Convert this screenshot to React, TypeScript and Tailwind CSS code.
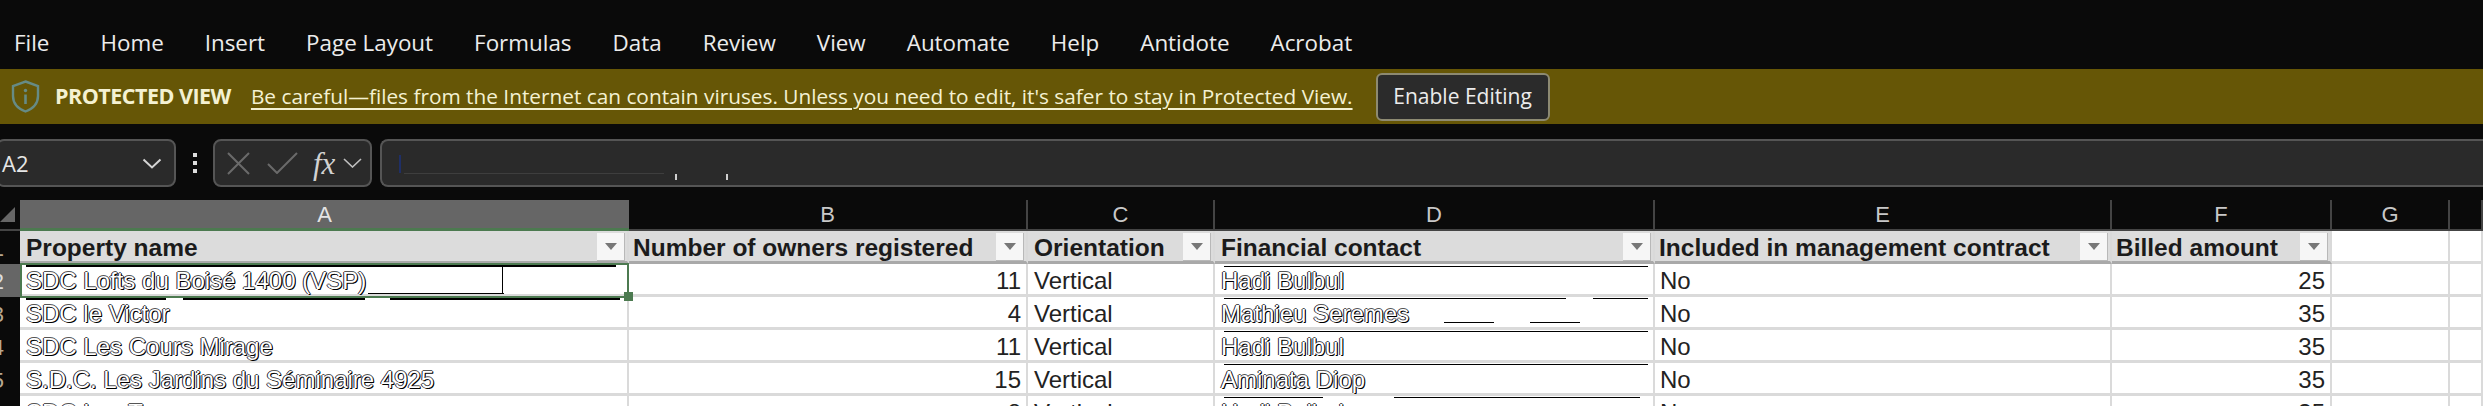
import React from "react";

const tabs = ["File", "Home", "Insert", "Page Layout", "Formulas", "Data", "Review", "View", "Automate", "Help", "Antidote", "Acrobat"];

const ui = "font-['Open_Sans','Noto_Sans',sans-serif]";
const ghost = "text-white [text-shadow:1px_1px_0_#000,-1px_0_0_#24243c,0_-1px_0_#555,1px_0_0_#333]";

function Filter() {
  return (
    <span className="absolute right-[2px] top-[2px] flex h-[28px] w-[28px] items-center justify-center border-r border-b border-[#b8b8b8] bg-[#f6f6f6]">
      <svg width="12" height="8" viewBox="0 0 12 8"><path d="M0 0h12L6 7z" fill="#777" /></svg>
    </span>
  );
}

function Line({ x, y, w, h = 1 }: { x: number; y: number; w: number; h?: number }) {
  return <span className="absolute bg-black" style={{ left: x, top: y, width: w, height: h }} />;
}

function ColHead({ l, active }: { l: string; active?: boolean }) {
  return (
    <div className={active
      ? "flex h-[31px] items-center justify-center border-b-[3px] border-[#4c7a50] bg-[#666666] text-[22px] text-[#e4e4e4]"
      : "flex h-[31px] items-center justify-center border-r-2 border-b-2 border-[#444444] text-[22px] text-[#c8c8c8]"}>
      {l}
    </div>
  );
}

function Head({ t, f = true, pl = "pl-[6px]" }: { t: string; f?: boolean; pl?: string }) {
  return (
    <div className={`relative flex h-[33px] items-center overflow-hidden whitespace-nowrap border-r-2 border-b-[3px] border-r-[#d9d9d9] border-b-[#a9a9a9] bg-[#dcdcdc] pt-[4px] text-[24.5px] font-bold text-[#1b1b1b] ${pl}`}>
      {t}
      {f && <Filter />}
    </div>
  );
}

function Blank({ h = "h-[33px]" }: { h?: string }) {
  return <div className={`${h} border-r-2 border-b-[3px] border-[#dadada] bg-white`} />;
}

function Cell({ t, right, ghostText, pl = "pl-[6px]" }: { t: string; right?: boolean; ghostText?: boolean; pl?: string }) {
  return (
    <div className={`relative flex h-[33px] items-center overflow-visible whitespace-nowrap border-r-2 border-b-[3px] border-[#dadada] bg-white pt-[3px] text-[24px] ${right ? "justify-end pr-[5px]" : pl} ${ghostText ? ghost : "text-[#222222]"}`}>
      {t}
    </div>
  );
}

function RowNum({ n, active }: { n: number; active?: boolean }) {
  return (
    <div className={`flex h-[33px] items-center justify-end overflow-hidden pr-[16px] pt-[2px] text-[22px] ${active ? "bg-[#666666] text-[#dddddd]" : "bg-[#0a0a0a] text-[#b8a890]"}`}>
      {n}
    </div>
  );
}

const rows = [
  ["SDC Lofts du Boisé 1400 (VSP)", "11", "Hadi Bulbul", "25"],
  ["SDC le Victor", "4", "Mathieu Seremes", "35"],
  ["SDC Les Cours Mirage", "11", "Hadi Bulbul", "35"],
  ["S.D.C. Les Jardins du Séminaire 4925", "15", "Aminata Diop", "35"],
  ["SDC Les Tours", "8", "Hadi Bulbul", "35"],
];

export default function App() {
  return (
    <div className="relative h-[406px] w-[2483px] overflow-hidden bg-[#0a0a0a]">
      <nav className={`flex h-[69px] items-center pl-[14px] pt-[16px] text-[22.4px] text-[#ececec] ${ui}`}>
        {tabs.map((t, i) => (
          <span key={t} className={i === 0 ? "mr-[51px]" : "mr-[41px]"}>{t}</span>
        ))}
      </nav>

      <div className={`flex h-[55px] items-center bg-[#665606] text-[#f4f1d2] ${ui}`}>
        <svg className="ml-[11px]" width="29" height="33" viewBox="0 0 29 33" fill="none">
          <path d="M14.5 1.5 L27 6 V16 C27 24 21 29 14.5 31.5 C8 29 2 24 2 16 V6 Z" stroke="#668b85" strokeWidth="2.4" />
          <circle cx="14.5" cy="10.5" r="1.7" fill="#668b85" />
          <path d="M14.5 14.5 V24" stroke="#668b85" strokeWidth="2.6" />
        </svg>
        <span className="ml-[15px] whitespace-nowrap text-[21.5px] font-bold tracking-[-0.5px]">PROTECTED VIEW</span>
        <span className="ml-[20px] whitespace-nowrap text-[20.8px] underline decoration-2 underline-offset-[4px]">Be careful—files from the Internet can contain viruses. Unless you need to edit, it's safer to stay in Protected View.</span>
        <button className="ml-[23px] flex h-[48px] w-[174px] items-center justify-center rounded-[6px] border-2 border-[#8d8a72] bg-[#2b2b2b] text-[21px] text-[#ececec]">Enable Editing</button>
      </div>

      <div className="mt-[15px] flex h-[48px] items-stretch">
        <div className={`-ml-[4px] flex w-[180px] items-center justify-between rounded-[8px] border-2 border-[#555555] bg-[#2a2a2a] pl-[4px] pr-[12px] text-[22px] text-[#e6e6e6] ${ui}`}>
          <span>A2</span>
          <svg width="20" height="11" viewBox="0 0 20 11" fill="none"><path d="M1.5 1.5 L10 9.5 L18.5 1.5" stroke="#d4d4d4" strokeWidth="2" /></svg>
        </div>
        <div className="flex w-[37px] flex-col items-center justify-center gap-[4px]">
          <span className="h-[4px] w-[4px] bg-[#dddddd]" />
          <span className="h-[4px] w-[4px] bg-[#dddddd]" />
          <span className="h-[4px] w-[4px] bg-[#dddddd]" />
        </div>
        <div className="flex w-[159px] items-center rounded-[8px] border-2 border-[#555555] bg-[#2a2a2a] pl-[12px]">
          <svg width="23" height="23" viewBox="0 0 23 23" fill="none"><path d="M1 1 L22 22 M22 1 L1 22" stroke="#6a6a6a" strokeWidth="2" /></svg>
          <svg className="ml-[17px]" width="31" height="22" viewBox="0 0 31 22" fill="none"><path d="M1 12 L10 21 L30 1" stroke="#6a6a6a" strokeWidth="2" /></svg>
          <span className="ml-[15px] font-['Liberation_Serif',serif] text-[31px] italic leading-none text-[#d2d2d2]">fx</span>
          <svg className="ml-[8px]" width="19" height="10" viewBox="0 0 19 10" fill="none"><path d="M1 1 L9.5 9 L18 1" stroke="#c0c0c0" strokeWidth="1.6" /></svg>
        </div>
        <div className="relative ml-[8px] flex-1 rounded-l-[8px] border-2 border-r-0 border-[#555555] bg-[#2a2a2a]">
          <span className="absolute left-[17px] top-[14px] h-[18px] w-[2px] bg-[#1f2f66]" />
          <span className="absolute left-[22px] top-[32px] h-[1px] w-[260px] bg-[#3e3e3e]" />
          <span className="absolute left-[293px] top-[33px] h-[6px] w-[2px] bg-[#cfcfcf]" />
          <span className="absolute left-[344px] top-[33px] h-[6px] w-[2px] bg-[#cfcfcf]" />
        </div>
      </div>

      <div className="mt-[13px] flex font-['Liberation_Sans',Arial,sans-serif]">
        <div className="w-[20px] shrink-0">
          <div className="flex h-[31px] items-center border-b-2 border-[#444444]">
            <svg width="16" height="16" viewBox="0 0 16 16"><path d="M15 0V15H0z" fill="#666666" /></svg>
          </div>
          <RowNum n={1} />
          <RowNum n={2} active />
          <RowNum n={3} />
          <RowNum n={4} />
          <RowNum n={5} />
          <RowNum n={6} />
        </div>

        <div className="relative grid flex-1 grid-cols-[609px_399px_187px_440px_457px_220px_118px_33px]">
          <ColHead l="A" active />
          <ColHead l="B" />
          <ColHead l="C" />
          <ColHead l="D" />
          <ColHead l="E" />
          <ColHead l="F" />
          <ColHead l="G" />
          <ColHead l="" />

          <Head t="Property name" />
          <Head t="Number of owners registered" pl="pl-[4px]" />
          <Head t="Orientation" />
          <Head t="Financial contact" />
          <Head t="Included in management contract" pl="pl-[4px]" />
          <Head t="Billed amount" pl="pl-[4px]" />
          <Blank />
          <Blank />

          {rows.map((r) => (
            <React.Fragment key={r[0]}>
              <Cell t={r[0]} ghostText />
              <Cell t={r[1]} right />
              <Cell t="Vertical" />
              <Cell t={r[2]} ghostText />
              <Cell t="No" pl="pl-[5px]" />
              <Cell t={r[3]} right />
              <Blank />
              <Blank />
            </React.Fragment>
          ))}

          <span className="pointer-events-none absolute left-0 top-[63px] h-[35px] w-[609px] border-2 border-[#4c7a50]" />
          <span className="absolute left-[604px] top-[92px] h-[9px] w-[9px] bg-[#4c7a50]" />

          <Line x={6} y={65} w={590} h={2} />
          <Line x={6} y={98} w={140} h={2} />
          <Line x={163} y={98} w={182} h={2} />
          <Line x={370} y={98} w={230} h={2} />
          <Line x={348} y={93} w={136} />
          <Line x={482} y={65} w={1} h={29} />

          <Line x={1204} y={66} w={424} />
          <Line x={1204} y={98} w={342} />
          <Line x={1573} y={98} w={55} />
          <Line x={1424} y={122} w={50} />
          <Line x={1510} y={122} w={50} />
          <Line x={1204} y={131} w={424} />
          <Line x={1204} y={164} w={424} />
          <Line x={1204} y={197} w={99} />
          <Line x={1374} y={197} w={246} />
        </div>
      </div>
    </div>
  );
}
